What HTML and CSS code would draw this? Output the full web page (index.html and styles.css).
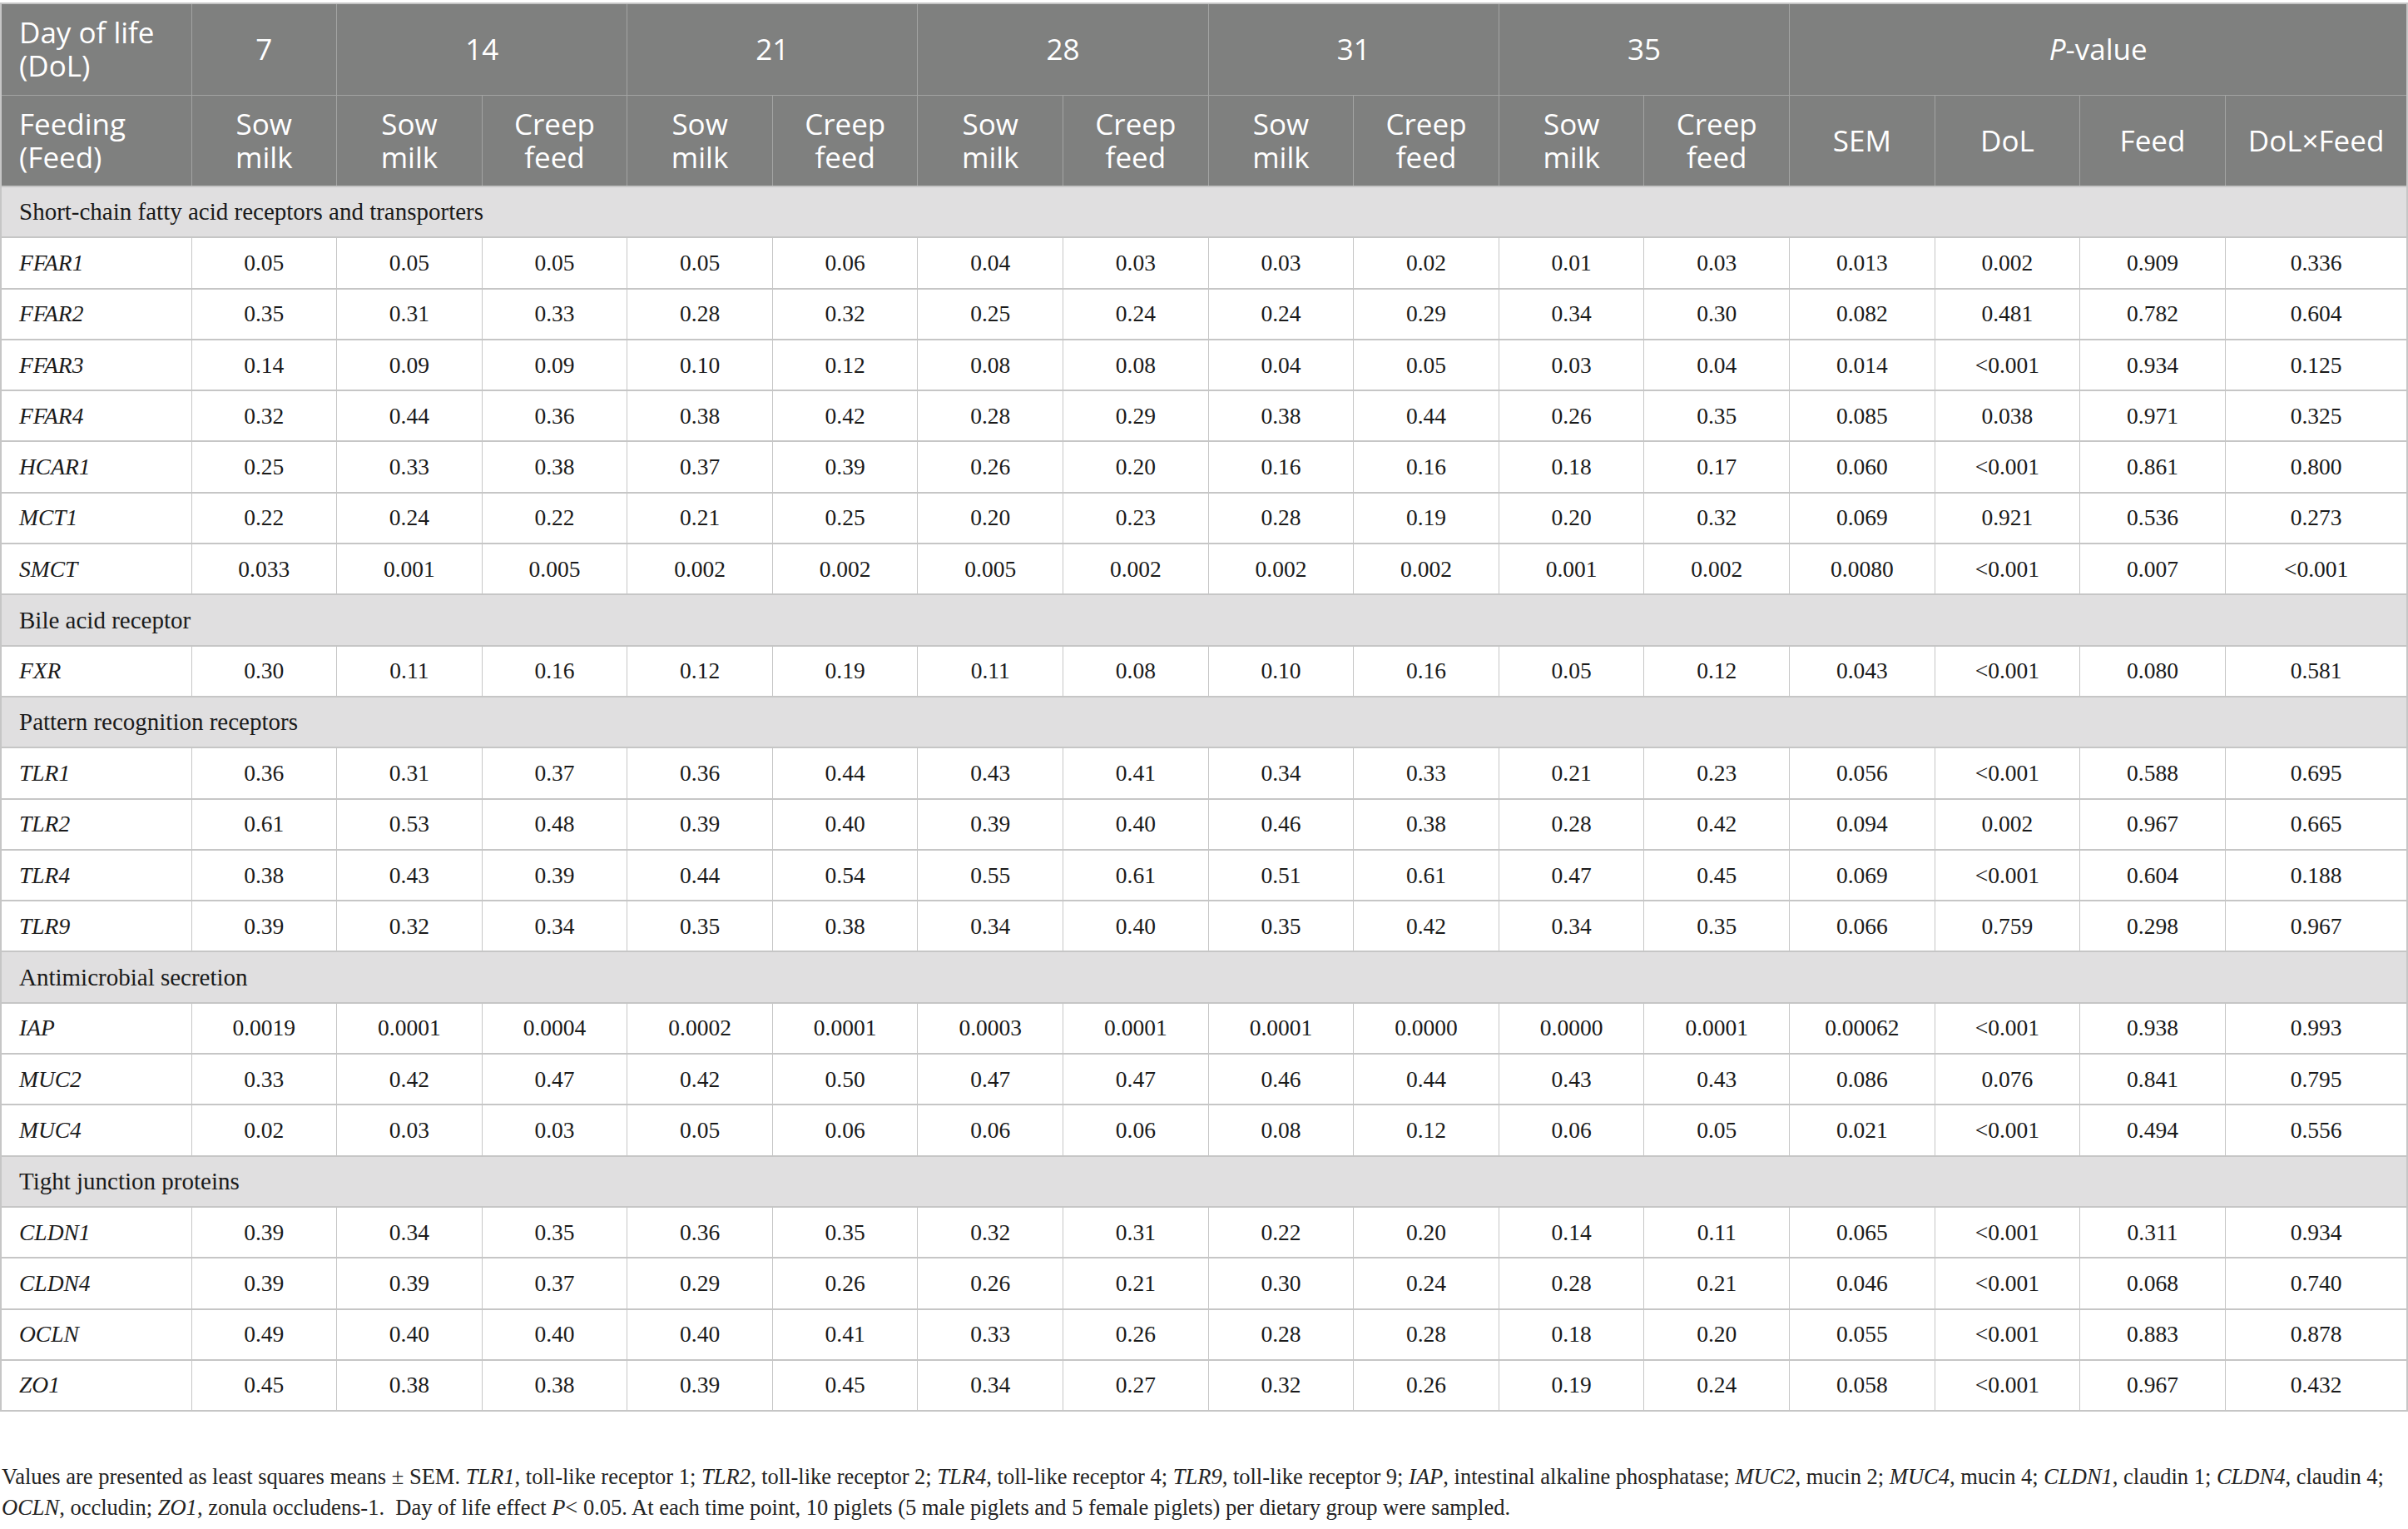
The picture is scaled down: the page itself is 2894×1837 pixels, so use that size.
FILE: index.html
```html
<!DOCTYPE html>
<html lang="en">
<head>
  <meta charset="UTF-8" />
  <title>Table – gene expression by day of life and feeding</title>
  <link rel="stylesheet" href="styles.css">
</head>
<body>

  <div class="table-wrap">
    <table class="data-table">
      <colgroup>
        <col class="col-label">
        <col span="11" class="col-val">
        <col span="3" class="col-val">
        <col class="col-last">
      </colgroup>
      <thead>
        <tr>
          <th class="lead">Day of life<br>(DoL)</th>
          <th>7</th>
          <th colspan="2">14</th>
          <th colspan="2">21</th>
          <th colspan="2">28</th>
          <th colspan="2">31</th>
          <th colspan="2">35</th>
          <th colspan="4"><i>P</i>-value</th>
        </tr>
        <tr>
          <th class="lead">Feeding<br>(Feed)</th>
          <th>Sow<br>milk</th>
          <th>Sow<br>milk</th><th>Creep<br>feed</th>
          <th>Sow<br>milk</th><th>Creep<br>feed</th>
          <th>Sow<br>milk</th><th>Creep<br>feed</th>
          <th>Sow<br>milk</th><th>Creep<br>feed</th>
          <th>Sow<br>milk</th><th>Creep<br>feed</th>
          <th>SEM</th><th>DoL</th><th>Feed</th><th>DoL×Feed</th>
        </tr>
      </thead>
      <tbody>
        <tr class="section"><td colspan="16">Short-chain fatty acid receptors and transporters</td></tr>
        <tr><td><i>FFAR1</i></td><td>0.05</td><td>0.05</td><td>0.05</td><td>0.05</td><td>0.06</td><td>0.04</td><td>0.03</td><td>0.03</td><td>0.02</td><td>0.01</td><td>0.03</td><td>0.013</td><td>0.002</td><td>0.909</td><td>0.336</td></tr>
        <tr><td><i>FFAR2</i></td><td>0.35</td><td>0.31</td><td>0.33</td><td>0.28</td><td>0.32</td><td>0.25</td><td>0.24</td><td>0.24</td><td>0.29</td><td>0.34</td><td>0.30</td><td>0.082</td><td>0.481</td><td>0.782</td><td>0.604</td></tr>
        <tr><td><i>FFAR3</i></td><td>0.14</td><td>0.09</td><td>0.09</td><td>0.10</td><td>0.12</td><td>0.08</td><td>0.08</td><td>0.04</td><td>0.05</td><td>0.03</td><td>0.04</td><td>0.014</td><td>&lt;0.001</td><td>0.934</td><td>0.125</td></tr>
        <tr><td><i>FFAR4</i></td><td>0.32</td><td>0.44</td><td>0.36</td><td>0.38</td><td>0.42</td><td>0.28</td><td>0.29</td><td>0.38</td><td>0.44</td><td>0.26</td><td>0.35</td><td>0.085</td><td>0.038</td><td>0.971</td><td>0.325</td></tr>
        <tr><td><i>HCAR1</i></td><td>0.25</td><td>0.33</td><td>0.38</td><td>0.37</td><td>0.39</td><td>0.26</td><td>0.20</td><td>0.16</td><td>0.16</td><td>0.18</td><td>0.17</td><td>0.060</td><td>&lt;0.001</td><td>0.861</td><td>0.800</td></tr>
        <tr><td><i>MCT1</i></td><td>0.22</td><td>0.24</td><td>0.22</td><td>0.21</td><td>0.25</td><td>0.20</td><td>0.23</td><td>0.28</td><td>0.19</td><td>0.20</td><td>0.32</td><td>0.069</td><td>0.921</td><td>0.536</td><td>0.273</td></tr>
        <tr><td><i>SMCT</i></td><td>0.033</td><td>0.001</td><td>0.005</td><td>0.002</td><td>0.002</td><td>0.005</td><td>0.002</td><td>0.002</td><td>0.002</td><td>0.001</td><td>0.002</td><td>0.0080</td><td>&lt;0.001</td><td>0.007</td><td>&lt;0.001</td></tr>
        <tr class="section"><td colspan="16">Bile acid receptor</td></tr>
        <tr><td><i>FXR</i></td><td>0.30</td><td>0.11</td><td>0.16</td><td>0.12</td><td>0.19</td><td>0.11</td><td>0.08</td><td>0.10</td><td>0.16</td><td>0.05</td><td>0.12</td><td>0.043</td><td>&lt;0.001</td><td>0.080</td><td>0.581</td></tr>
        <tr class="section"><td colspan="16">Pattern recognition receptors</td></tr>
        <tr><td><i>TLR1</i></td><td>0.36</td><td>0.31</td><td>0.37</td><td>0.36</td><td>0.44</td><td>0.43</td><td>0.41</td><td>0.34</td><td>0.33</td><td>0.21</td><td>0.23</td><td>0.056</td><td>&lt;0.001</td><td>0.588</td><td>0.695</td></tr>
        <tr><td><i>TLR2</i></td><td>0.61</td><td>0.53</td><td>0.48</td><td>0.39</td><td>0.40</td><td>0.39</td><td>0.40</td><td>0.46</td><td>0.38</td><td>0.28</td><td>0.42</td><td>0.094</td><td>0.002</td><td>0.967</td><td>0.665</td></tr>
        <tr><td><i>TLR4</i></td><td>0.38</td><td>0.43</td><td>0.39</td><td>0.44</td><td>0.54</td><td>0.55</td><td>0.61</td><td>0.51</td><td>0.61</td><td>0.47</td><td>0.45</td><td>0.069</td><td>&lt;0.001</td><td>0.604</td><td>0.188</td></tr>
        <tr><td><i>TLR9</i></td><td>0.39</td><td>0.32</td><td>0.34</td><td>0.35</td><td>0.38</td><td>0.34</td><td>0.40</td><td>0.35</td><td>0.42</td><td>0.34</td><td>0.35</td><td>0.066</td><td>0.759</td><td>0.298</td><td>0.967</td></tr>
        <tr class="section"><td colspan="16">Antimicrobial secretion</td></tr>
        <tr><td><i>IAP</i></td><td>0.0019</td><td>0.0001</td><td>0.0004</td><td>0.0002</td><td>0.0001</td><td>0.0003</td><td>0.0001</td><td>0.0001</td><td>0.0000</td><td>0.0000</td><td>0.0001</td><td>0.00062</td><td>&lt;0.001</td><td>0.938</td><td>0.993</td></tr>
        <tr><td><i>MUC2</i></td><td>0.33</td><td>0.42</td><td>0.47</td><td>0.42</td><td>0.50</td><td>0.47</td><td>0.47</td><td>0.46</td><td>0.44</td><td>0.43</td><td>0.43</td><td>0.086</td><td>0.076</td><td>0.841</td><td>0.795</td></tr>
        <tr><td><i>MUC4</i></td><td>0.02</td><td>0.03</td><td>0.03</td><td>0.05</td><td>0.06</td><td>0.06</td><td>0.06</td><td>0.08</td><td>0.12</td><td>0.06</td><td>0.05</td><td>0.021</td><td>&lt;0.001</td><td>0.494</td><td>0.556</td></tr>
        <tr class="section"><td colspan="16">Tight junction proteins</td></tr>
        <tr><td><i>CLDN1</i></td><td>0.39</td><td>0.34</td><td>0.35</td><td>0.36</td><td>0.35</td><td>0.32</td><td>0.31</td><td>0.22</td><td>0.20</td><td>0.14</td><td>0.11</td><td>0.065</td><td>&lt;0.001</td><td>0.311</td><td>0.934</td></tr>
        <tr><td><i>CLDN4</i></td><td>0.39</td><td>0.39</td><td>0.37</td><td>0.29</td><td>0.26</td><td>0.26</td><td>0.21</td><td>0.30</td><td>0.24</td><td>0.28</td><td>0.21</td><td>0.046</td><td>&lt;0.001</td><td>0.068</td><td>0.740</td></tr>
        <tr><td><i>OCLN</i></td><td>0.49</td><td>0.40</td><td>0.40</td><td>0.40</td><td>0.41</td><td>0.33</td><td>0.26</td><td>0.28</td><td>0.28</td><td>0.18</td><td>0.20</td><td>0.055</td><td>&lt;0.001</td><td>0.883</td><td>0.878</td></tr>
        <tr><td><i>ZO1</i></td><td>0.45</td><td>0.38</td><td>0.38</td><td>0.39</td><td>0.45</td><td>0.34</td><td>0.27</td><td>0.32</td><td>0.26</td><td>0.19</td><td>0.24</td><td>0.058</td><td>&lt;0.001</td><td>0.967</td><td>0.432</td></tr>
      </tbody>
    </table>

    <p class="footnote">Values are presented as least squares means ± SEM. <i>TLR1</i>, toll-like receptor 1; <i>TLR2</i>, toll-like receptor 2; <i>TLR4</i>, toll-like receptor 4; <i>TLR9</i>, toll-like receptor 9; <i>IAP</i>, intestinal alkaline phosphatase; <i>MUC2</i>, mucin 2; <i>MUC4</i>, mucin 4; <i>CLDN1</i>, claudin 1; <i>CLDN4</i>, claudin 4; <i>OCLN</i>, occludin; <i>ZO1</i>, zonula occludens-1.&nbsp; Day of life effect <i>P</i>&lt; 0.05. At each time point, 10 piglets (5 male piglets and 5 female piglets) per dietary group were sampled.</p>
  </div>

</body>
</html>
```

FILE: styles.css
```css
* { box-sizing: border-box; margin: 0; padding: 0; }
body {
  background: #fff;
  color: #1a1a1a;
  font-family: "Liberation Serif", "Times New Roman", serif;
}
.table-wrap {
  padding-top: 3px;
  width: 2893px;
}
.data-table {
  width: 2893px;
  table-layout: fixed;
  border-collapse: collapse;
  border: 2px solid #c6c6c6;
}
.col-label { width: 229px; }
.col-val { width: 174.6px; }
.col-last { width: 219px; }

/* header */
.data-table thead th {
  height: 110px;
  background: #7f807f;
  color: #fff;
  font-family: "Open Sans", "Noto Sans", sans-serif;
  font-weight: 400;
  font-size: 35px;
  line-height: 40px;
  text-align: center;
  vertical-align: middle;
  border: 1px solid #a3a4a3;
  border-top-color: #c6c6c6;
}
.data-table thead th.lead {
  text-align: left;
  padding-left: 21px;
}
.data-table thead th i { font-style: italic; }

/* body */
.data-table tbody td {
  height: 61.3px;
  font-size: 27.5px;
  text-align: center;
  vertical-align: middle;
  border-left: 1px solid #c6c6c6;
  border-right: 1px solid #c6c6c6;
  border-top: 2px solid #c6c6c6;
  border-bottom: 2px solid #c6c6c6;
}
.data-table tbody td:first-child {
  text-align: left;
  padding-left: 21px;
}
.data-table tbody tr.section td {
  background: #e0dfe0;
  text-align: left;
  padding-left: 21px;
  font-size: 29px;
}

.footnote {
  margin-top: 60px;
  padding-left: 2px;
  font-size: 26.5px;
  line-height: 37px;
  color: #222;
}
```
